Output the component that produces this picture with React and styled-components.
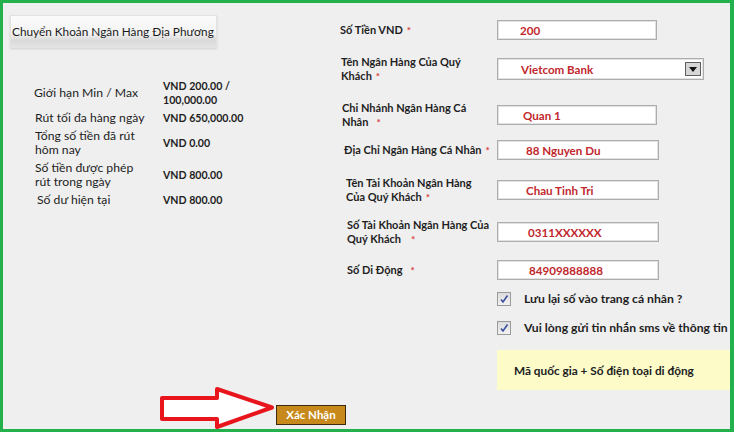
import styled, { createGlobalStyle } from 'styled-components';

const GlobalStyle = createGlobalStyle`
    body {
        margin: 0;
        background: #efefef;
    }
`;

const Page = styled.div`
    position: relative;
    width: 734px;
    height: 432px;
`;

const Frame = styled.div`
    box-sizing: border-box;
    width: 734px;
    height: 432px;
    border-style: solid;
    border-color: #22b14c;
    border-width: 3px 4px 3px 3px;
    background: #efefef;
    display: flex;
    flex-direction: column;
    overflow: hidden;
    font-family: Lato, "Noto Sans", sans-serif;
    color: #1e1e1e;
`;

const Main = styled.div`
    display: flex;
`;

const LeftColumn = styled.div`
    width: 337px;
    flex-shrink: 0;
    padding: 12px 0 0 7px;
    box-sizing: border-box;
`;

const Tab = styled.div`
    width: 207px;
    height: 33px;
    box-sizing: border-box;
    display: flex;
    align-items: center;
    padding-left: 1px;
    white-space: nowrap;
    font-size: 11.8px;
    color: #1a1a1a;
    background: linear-gradient(#fbfbfb 0%, #f3f3f3 55%, #d9d9d9 80%, #e4e4e4 100%);
    border: 1px solid #e2e2e2;
    box-shadow: 0 1px 2px rgba(0, 0, 0, 0.12);
`;

const InfoGrid = styled.div`
    display: grid;
    grid-template-columns: 129px auto;
    row-gap: 4px;
    align-items: center;
    margin: 31px 0 0 24px;
`;

const InfoLabel = styled.div`
    font-size: 12.2px;
    line-height: 14px;
    white-space: nowrap;
    padding-left: ${(p) => p.$indent || 0}px;
`;

const InfoValue = styled.div`
    font-size: 10.6px;
    font-weight: 700;
    line-height: 14px;
    white-space: nowrap;
`;

const RightColumn = styled.div`
    flex: 1;
    min-width: 0;
    padding-top: 17px;
`;

const FormRow = styled.div`
    display: flex;
    align-items: center;
    margin-top: ${(p) => p.$mt}px;
    min-height: 20px;
`;

const FieldLabel = styled.div`
    width: 157px;
    flex-shrink: 0;
    box-sizing: border-box;
    padding-left: ${(p) => p.$indent}px;
    white-space: nowrap;
    font-size: 11px;
    font-weight: 700;
    line-height: 14px;
    color: #1e1e1e;
`;

const Star = styled.span`
    color: #d83a3a;
    font-size: 10px;
    font-weight: 700;
    margin-left: ${(p) => p.$gap || 4}px;
`;

const TextBox = styled.div`
    box-sizing: border-box;
    width: ${(p) => p.$w}px;
    height: 20px;
    display: flex;
    align-items: center;
    padding-left: ${(p) => p.$pad}px;
    background: #fff;
    border: 1px solid #adadad;
    box-shadow: inset 0 0 0 1px #e2e2e2;
    white-space: nowrap;
    font-size: 11.6px;
    font-weight: 700;
    color: #c1272d;
`;

const SelectBox = styled(TextBox)`
    height: 22px;
    justify-content: space-between;
    padding-right: 2px;
`;

const DropButton = styled.div`
    width: 16px;
    height: 14px;
    box-sizing: border-box;
    border: 1px solid #5e5e5e;
    background: #d6d6d6;
    display: flex;
    align-items: center;
    justify-content: center;
`;

const CheckRow = styled.div`
    display: flex;
    align-items: center;
    gap: 13px;
    margin-top: ${(p) => p.$mt}px;
    padding-left: 157px;
    white-space: nowrap;
    font-size: 12.2px;
    font-weight: 700;
`;

const CheckBox = styled.div`
    width: 14px;
    height: 14px;
    flex-shrink: 0;
    box-sizing: border-box;
    border: 1px solid #9a9a9a;
    background: linear-gradient(#dcdcdc, #f2f2f2);
    display: flex;
    align-items: center;
    justify-content: center;
`;

const Hint = styled.div`
    margin: 15px 0 0 157px;
    height: 40px;
    box-sizing: border-box;
    padding-left: 17px;
    display: flex;
    align-items: center;
    background: #fdfcc9;
    white-space: nowrap;
    font-size: 11.8px;
    font-weight: 700;
    color: #222;
`;

const Footer = styled.div`
    margin-top: 13px;
    padding-left: 273px;
`;

const SubmitButton = styled.button`
    width: 70px;
    height: 20px;
    box-sizing: border-box;
    padding: 0;
    border: 1px solid #3b2a0e;
    background: #c7891b;
    color: #fff;
    font-family: Lato, "Noto Sans", sans-serif;
    font-size: 11.5px;
    font-weight: 700;
`;

const ArrowMark = styled.svg`
    position: absolute;
    left: 156px;
    top: 384px;
`;

const info = [
    { label: ['Giới hạn Min / Max'], value: ['VND 200.00 /', '100,000.00'], indent: 0 },
    { label: ['Rút tối đa hàng ngày'], value: ['VND 650,000.00'], indent: 1 },
    { label: ['Tổng số tiền đã rút', 'hôm nay'], value: ['VND 0.00'], indent: 1 },
    { label: ['Số tiền được phép', 'rút trong ngày'], value: ['VND 800.00'], indent: 1 },
    { label: ['Số dư hiện tại'], value: ['VND 800.00'], indent: 3 },
];

const fields = [
    { label: ['Số Tiền VND'], value: '200', mt: 0, indent: 0, w: 160, pad: 22 },
    { label: ['Tên Ngân Hàng Của Quý', 'Khách'], value: 'Vietcom Bank', mt: 15, indent: 1, w: 207, pad: 23, select: true },
    { label: ['Chi Nhánh Ngân Hàng Cá', 'Nhân'], value: 'Quan 1', mt: 18, indent: 2, w: 160, pad: 25, gap: 8 },
    { label: ['Địa Chỉ Ngân Hàng Cá Nhân'], value: '88 Nguyen Du', mt: 11, indent: 4, w: 162, pad: 28 },
    { label: ['Tên Tài Khoản Ngân Hàng', 'Của Quý Khách'], value: 'Chau Tinh Tri', mt: 16, indent: 6, w: 162, pad: 28 },
    { label: ['Số Tài Khoản Ngân Hàng Của', 'Quý Khách'], value: '0311XXXXXX', mt: 14, indent: 7, w: 162, pad: 30, gap: 10 },
    { label: ['Số Di Động'], value: '84909888888', mt: 14, indent: 7, w: 162, pad: 31, gap: 8 },
];

function Lines({ lines, star, gap }) {
    return lines.map((line, i) => (
        <span key={i}>
            {i > 0 && <br />}
            {line}
            {star && i === lines.length - 1 && <Star $gap={gap}>*</Star>}
        </span>
    ));
}

function Tick() {
    return (
        <svg width="10" height="10" viewBox="0 0 10 10">
            <path d="M2 5.5 L4 8 L8.5 1.5" fill="none" stroke="#3a4f9e" strokeWidth="1.6" />
        </svg>
    );
}

export default function App() {
    return (
        <>
            <GlobalStyle />
            <Page>
                <Frame>
                    <Main>
                        <LeftColumn>
                            <Tab>Chuyển Khoản Ngân Hàng Địa Phương</Tab>
                            <InfoGrid>
                                {info.map((row, i) => [
                                    <InfoLabel key={'l' + i} $indent={row.indent}>
                                        <Lines lines={row.label} />
                                    </InfoLabel>,
                                    <InfoValue key={'v' + i}>
                                        <Lines lines={row.value} />
                                    </InfoValue>,
                                ])}
                            </InfoGrid>
                        </LeftColumn>
                        <RightColumn>
                            {fields.map((f) => (
                                <FormRow key={f.value} $mt={f.mt}>
                                    <FieldLabel $indent={f.indent}>
                                        <Lines lines={f.label} star gap={f.gap} />
                                    </FieldLabel>
                                    {f.select ? (
                                        <SelectBox $w={f.w} $pad={f.pad}>
                                            {f.value}
                                            <DropButton>
                                                <svg width="8" height="5" viewBox="0 0 8 5">
                                                    <path d="M0 0 H8 L4 5 Z" fill="#111" />
                                                </svg>
                                            </DropButton>
                                        </SelectBox>
                                    ) : (
                                        <TextBox $w={f.w} $pad={f.pad}>{f.value}</TextBox>
                                    )}
                                </FormRow>
                            ))}
                            <CheckRow $mt={11}>
                                <CheckBox><Tick /></CheckBox>
                                Lưu lại số vào trang cá nhân ?
                            </CheckRow>
                            <CheckRow $mt={14}>
                                <CheckBox><Tick /></CheckBox>
                                Vui lòng gửi tin nhắn sms về thông tin
                            </CheckRow>
                            <Hint>Mã quốc gia + Số điện toại di động</Hint>
                        </RightColumn>
                    </Main>
                    <Footer>
                        <SubmitButton>Xác Nhận</SubmitButton>
                    </Footer>
                </Frame>
                <ArrowMark width="122" height="48" viewBox="156 384 122 48">
                    <path
                        d="M162 398 H217 V389 L272 407.5 L217 427 V419 H162 Z"
                        fill="#fff"
                        stroke="#e8151d"
                        strokeWidth="4"
                        strokeLinejoin="round"
                    />
                </ArrowMark>
            </Page>
        </>
    );
}
